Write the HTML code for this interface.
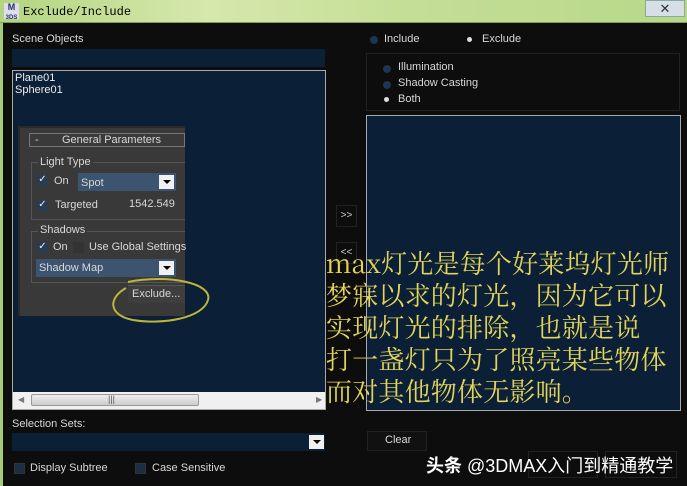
<!DOCTYPE html>
<html><head><meta charset="utf-8"><style>
*{margin:0;padding:0;box-sizing:border-box}
body{width:687px;height:486px;overflow:hidden;background:#0d0d0d;position:relative;font-family:"Liberation Sans",sans-serif;font-size:11px;color:#d8d8d8}
.a{position:absolute}
.t{position:absolute;white-space:nowrap}
.navy{background:#0b1f36}
.cb{position:absolute;width:11px;height:11px;background:#1a2e44;border:1px solid #333}
.ck{position:absolute;width:11px;height:11px;background:#2a3c52;color:#eee;font-size:10px;line-height:10px;text-align:center}
.rd{position:absolute;width:8px;height:8px;border-radius:50%;background:#1c3550}
.rw{background:#ddd}
.dd{position:absolute;width:15px;height:14px;background:#f0f0f0}
.dd:after{content:"";position:absolute;left:4px;top:5px;border-left:4px solid transparent;border-right:4px solid transparent;border-top:4px solid #000}
.zh{font-family:"Noto Serif CJK SC","Liberation Serif",serif;color:#e2d45a;font-size:26px;line-height:32px;letter-spacing:0.2px}
</style></head><body>
<div class="a" style="left:0;top:0;width:687px;height:23px;background:linear-gradient(90deg,#b3d580,#d5e8ad 30%,#c4de95 60%,#b8d889);border-bottom:1px solid #7ea050"></div>
<div class="a" style="left:4px;top:3px;width:15px;height:16px;background:#dde;font:bold 9px 'Liberation Sans';color:#236;text-align:center;line-height:9px">M<br><span style="font-size:6px">3DS</span></div>
<div class="t" style="left:23px;top:5px;font:12px 'Liberation Mono',monospace;color:#000">Exclude/Include</div>
<div class="a" style="left:645px;top:0;width:40px;height:17px;background:#d6dee8;border:1px solid #8a9;color:#333;text-align:center;font-size:13px;line-height:15px">✕</div>
<div class="a" style="left:0;top:23px;width:3px;height:463px;background:#a8cc78"></div>

<div class="t" style="left:12px;top:33px">Scene Objects</div>
<div class="a navy" style="left:12px;top:49px;width:313px;height:18px"></div>
<div class="a navy" style="left:12px;top:70px;width:314px;height:340px;border:1px solid #aaa"></div>
<div class="t" style="left:15px;top:72px;color:#eee;line-height:12px">Plane01<br>Sphere01</div>
<div class="a" style="left:18px;top:126px;width:167px;height:190px;background:#393939;border-left:2px solid #2a2a2a;border-top:2px solid #2a2a2a"></div>
<div class="a" style="left:29px;top:133px;width:156px;height:14px;border:1px solid #777;background:#3a3a3a"></div>
<div class="t" style="left:35px;top:134px">-</div>
<div class="t" style="left:62px;top:134px">General Parameters</div>
<div class="a" style="left:31px;top:162px;width:154px;height:58px;border:1px solid #555;border-right:none"></div>
<div class="t" style="left:38px;top:156px;background:#393939;padding:0 2px">Light Type</div>
<div class="ck" style="left:37px;top:175px">✓</div><div class="t" style="left:54px;top:175px">On</div>
<div class="a" style="left:78px;top:173px;width:98px;height:18px;background:#3c5470"></div>
<div class="t" style="left:81px;top:177px">Spot</div><div class="dd" style="left:159px;top:175px"></div>
<div class="ck" style="left:37px;top:200px">✓</div><div class="t" style="left:55px;top:199px">Targeted</div>
<div class="t" style="left:129px;top:198px">1542.549</div>
<div class="a" style="left:31px;top:231px;width:154px;height:52px;border:1px solid #555;border-right:none"></div>
<div class="t" style="left:38px;top:224px;background:#393939;padding:0 2px">Shadows</div>
<div class="ck" style="left:37px;top:242px">✓</div><div class="t" style="left:53px;top:241px">On</div>
<div class="cb" style="left:73px;top:242px;background:#333"></div><div class="t" style="left:89px;top:241px">Use Global Settings</div>
<div class="a" style="left:36px;top:259px;width:140px;height:18px;background:#3c5470"></div>
<div class="t" style="left:39px;top:262px">Shadow Map</div><div class="dd" style="left:159px;top:261px"></div>
<div class="a" style="left:128px;top:285px;width:57px;height:18px;background:#3e3e3e;border-top:1px solid #555"></div>
<div class="t" style="left:132px;top:288px">Exclude...</div>
<svg class="a" style="left:108px;top:278px" width="105" height="52"><path d="M20 4 C60 -4 105 5 100 22 C95 40 55 47 25 42 C0 37 0 20 18 10" fill="none" stroke="#bdb63a" stroke-width="2"/></svg>
<div class="a" style="left:13px;top:392px;width:312px;height:17px;background:#f0f0f0"></div>
<div class="a" style="left:31px;top:394px;width:168px;height:12px;background:linear-gradient(#eee,#ccc);border:1px solid #999;border-radius:2px"></div>
<div class="t" style="left:108px;top:394px;color:#555;font-size:9px">|||</div>
<div class="t" style="left:18px;top:395px;color:#777;font-size:8px">◀</div><div class="t" style="left:316px;top:395px;color:#777;font-size:8px">▶</div>

<div class="t" style="left:12px;top:418px">Selection Sets:</div>
<div class="a navy" style="left:12px;top:433px;width:313px;height:18px"></div>
<div class="dd" style="left:309px;top:435px"></div>
<div class="cb" style="left:14px;top:463px"></div><div class="t" style="left:30px;top:462px">Display Subtree</div>
<div class="cb" style="left:135px;top:463px"></div><div class="t" style="left:152px;top:462px">Case Sensitive</div>

<div class="rd" style="left:370px;top:36px"></div><div class="t" style="left:384px;top:33px">Include</div>
<div class="rd rw" style="left:467px;top:37px;width:5px;height:5px"></div><div class="t" style="left:482px;top:33px">Exclude</div>
<div class="a" style="left:366px;top:53px;width:314px;height:58px;border:1px solid #222"></div>
<div class="rd" style="left:383px;top:65px"></div><div class="t" style="left:398px;top:61px">Illumination</div>
<div class="rd" style="left:383px;top:81px"></div><div class="t" style="left:398px;top:77px">Shadow Casting</div>
<div class="rd rw" style="left:384px;top:97px;width:5px;height:5px"></div><div class="t" style="left:398px;top:93px">Both</div>
<div class="a navy" style="left:366px;top:115px;width:315px;height:296px;border:1px solid #aaa"></div>
<div class="a" style="left:336px;top:205px;width:21px;height:22px;border:1px solid #222;color:#ccc;font-size:10px;text-align:center;line-height:20px">&gt;&gt;</div>
<div class="a" style="left:336px;top:242px;width:21px;height:22px;border:1px solid #222;color:#ccc;font-size:10px;text-align:center;line-height:20px">&lt;&lt;</div>
<div class="a" style="left:367px;top:431px;width:60px;height:20px;background:#111;border:1px solid #222"></div>
<div class="t" style="left:385px;top:434px">Clear</div>
<div class="a" style="left:528px;top:451px;width:70px;height:27px;border:1px solid #222"></div>
<div class="a" style="left:605px;top:451px;width:72px;height:27px;border:1px solid #222"></div>

<div class="t zh" style="left:326px;top:247px">max灯光是每个好莱坞灯光师<br>梦寐以求的灯光，因为它可以<br>实现灯光的排除，也就是说<br>打一盏灯只为了照亮某些物体<br>而对其他物体无影响。</div>
<div class="t" style="left:426px;top:452px;font-family:'Liberation Sans','Noto Sans CJK SC',sans-serif;font-size:18px;color:#fff"><b>头条</b> @3DMAX入门到精通教学</div>
</body></html>
